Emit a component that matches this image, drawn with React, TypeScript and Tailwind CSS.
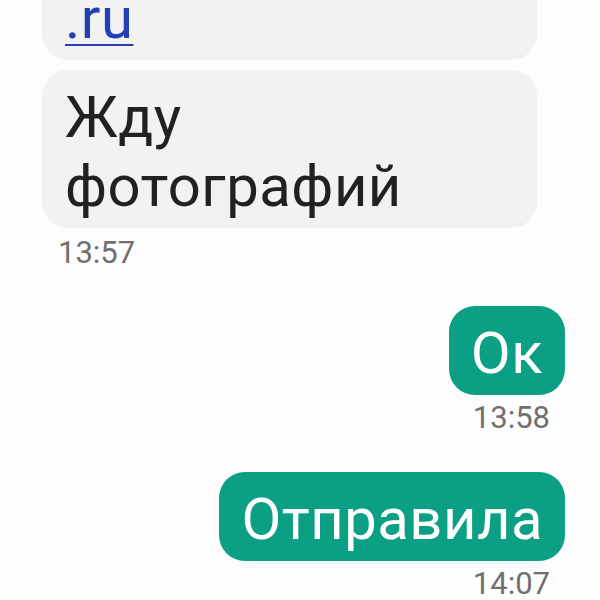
import React from 'react';

const font = { fontFamily: 'Roboto, "Noto Sans", sans-serif' };

const Incoming: React.FC<{ children: React.ReactNode; className?: string }> = ({ children, className = '' }) => (
  <div className={`w-[495px] rounded-[26px] bg-[#f2f2f2] pl-[23px] pr-[20px] pt-[13px] pb-[7px] text-[58px] leading-[69px] tracking-[0.5px] text-[#212121] ${className}`}>
    {children}
  </div>
);

const Outgoing: React.FC<{ text: string; time: string }> = ({ text, time }) => (
  <div className="flex flex-col items-end">
    <div className="rounded-[26px] bg-[#0b9f84] px-[22px] pt-[13px] pb-[7px] text-[58px] leading-[69px] tracking-[0.5px] text-white">{text}</div>
    <div className="mr-[15px] mt-[5px] text-[31px] leading-[36px] text-[#707070]">{time}</div>
  </div>
);

export default function App() {
  return (
    <div className="h-[600px] w-[600px] overflow-hidden bg-[#fdfdfd]" style={font}>
      <div className="flex flex-col pl-[42px] pr-[35px]">
        <Incoming className="mt-[-29px]">
          <a className="text-[#2340b5] underline decoration-[2px] underline-offset-[6px]">.ru</a>
        </Incoming>
        <Incoming className="mt-[10px]">Жду фотографий</Incoming>
        <div className="ml-[16px] mt-[7px] text-[31px] leading-[36px] text-[#707070]">13:57</div>

        <div className="mt-[35px]">
          <Outgoing text="Ок" time="13:58" />
        </div>
        <div className="mt-[36px]">
          <Outgoing text="Отправила" time="14:07" />
        </div>
      </div>
    </div>
  );
}
